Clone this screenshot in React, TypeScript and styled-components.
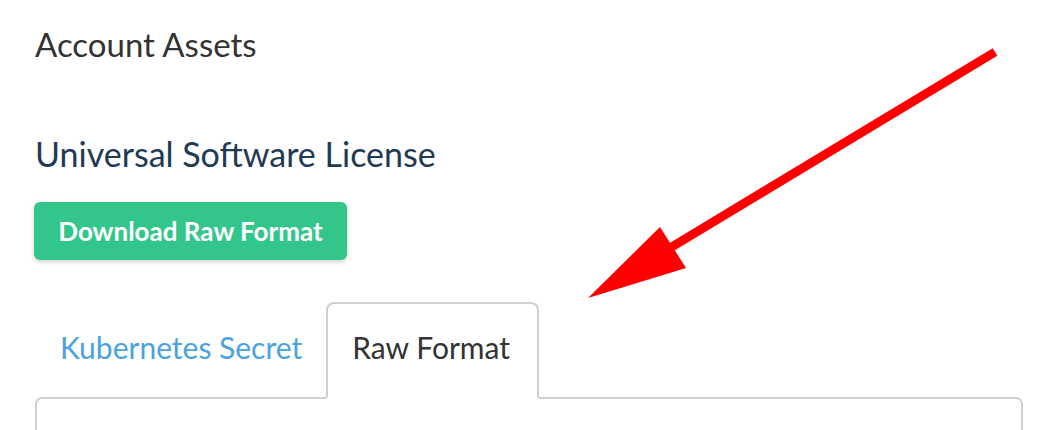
import React, { useState } from "react";
import styled, { createGlobalStyle } from "styled-components";

const GlobalStyle = createGlobalStyle`
  html, body { margin: 0; padding: 0; background: #ffffff; }
  body { font-family: Lato, "Open Sans", sans-serif; -webkit-font-smoothing: antialiased; }
`;

const Page = styled.div`
  position: relative;
  width: 1054px;
  height: 430px;
  overflow: hidden;
  box-sizing: border-box;
  padding: 0 31px 0 35px;
  display: flex;
  flex-direction: column;
  & > * { flex-shrink: 0; }
`;

const PageTitle = styled.h1`
  margin: 0;
  padding-top: 22px;
  font-size: 33px;
  line-height: 44px;
  font-weight: 400;
  color: #333333;
`;

const AssetTitle = styled.h2`
  margin: 66px 0 0;
  font-size: 34px;
  line-height: 44px;
  font-weight: 400;
  color: #1f3a54;
`;

const DownloadButton = styled.button`
  align-self: flex-start;
  margin: 26px 0 0 -1px;
  height: 58px;
  width: 313px;
  padding: 0;
  border: none;
  border-radius: 6px;
  background: #33c68b;
  color: #ffffff;
  font-family: inherit;
  font-size: 26px;
  font-weight: 700;
  box-shadow: 0 2px 5px rgba(0, 0, 0, 0.18);
  cursor: pointer;
`;

const TabList = styled.div`
  display: flex;
  margin-top: 42px;
  position: relative;
  z-index: 1;
  margin-bottom: -2px;
`;

const Tab = styled.button<{ $active: boolean }>`
  height: 97px;
  padding: 0 ${(p) => (p.$active ? "27px 7px 24px" : "22px 7px 23px")};
  box-sizing: border-box;
  border: 2px solid ${(p) => (p.$active ? "#d0d0d0" : "transparent")};
  border-bottom: 2px solid ${(p) => (p.$active ? "#ffffff" : "transparent")};
  border-radius: 8px 8px 0 0;
  background: ${(p) => (p.$active ? "#ffffff" : "transparent")};
  color: ${(p) => (p.$active ? "#333333" : "#4aa3df")};
  font-family: inherit;
  font-size: 30px;
  font-weight: 400;
  cursor: pointer;
`;

const Panel = styled.div`
  flex: 1 0 80px;
  border: 2px solid #d0d0d0;
  border-radius: 7px;
  background: #ffffff;
`;

const ArrowOverlay = styled.svg`
  position: absolute;
  left: 0;
  top: 0;
  pointer-events: none;
`;

export default function App() {
  const [tab, setTab] = useState("raw");
  return (
    <>
      <GlobalStyle />
      <Page>
        <PageTitle>Account Assets</PageTitle>
        <AssetTitle>Universal Software License</AssetTitle>
        <DownloadButton>Download Raw Format</DownloadButton>
        <TabList>
          <Tab $active={tab === "k8s"} onClick={() => setTab("k8s")}>
            Kubernetes Secret
          </Tab>
          <Tab $active={tab === "raw"} onClick={() => setTab("raw")}>
            Raw Format
          </Tab>
        </TabList>
        <Panel />
        <ArrowOverlay width="1054" height="430" viewBox="0 0 1054 430">
          <line x1="995" y1="52" x2="670" y2="248" stroke="#ff0000" strokeWidth="9" />
          <polygon points="588,298 660,227 686,268" fill="#ff0000" />
        </ArrowOverlay>
      </Page>
    </>
  );
}
